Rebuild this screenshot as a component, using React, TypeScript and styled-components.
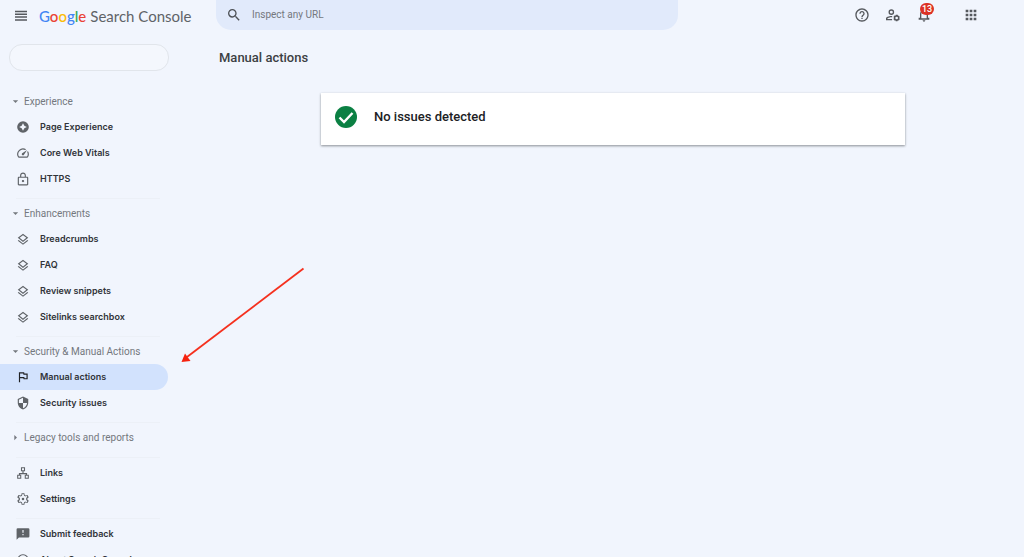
import React from "react";
import styled, { createGlobalStyle } from "styled-components";

const Global = createGlobalStyle`
  * { box-sizing: border-box; }
  html, body { margin: 0; padding: 0; background: #f1f5fd; }
  body { font-family: Roboto, "Liberation Sans", sans-serif; color: #202124; }
  button, input { font-family: inherit; }
`;

const Page = styled.div`
  position: relative;
  height: 100vh;
  overflow: hidden;
  display: flex;
  flex-direction: column;
`;

const Header = styled.header`
  display: flex;
  align-items: center;
  flex: none;
  height: 30px;
`;

const Brand = styled.div`
  display: flex;
  align-items: center;
  gap: 10px;
  flex: none;
  width: 216px;
  padding: 2px 0 0 13px;
`;

const IconButton = styled.button`
  position: relative;
  display: flex;
  align-items: center;
  justify-content: center;
  flex: none;
  width: 16px;
  height: 16px;
  padding: 0;
  border: 0;
  background: none;
  color: #55585d;
`;

const Logo = styled.a`
  display: flex;
  align-items: baseline;
  gap: 4px;
  font-family: Lato, Roboto, sans-serif;
  font-size: 15px;
  line-height: 20px;
  color: #5f6368;
  text-decoration: none;
  white-space: nowrap;
`;

const Wordmark = styled.span`
  font-weight: 500;
`;

const Letter = styled.span<{ $color: string }>`
  color: ${(p) => p.$color};
`;

const Search = styled.label`
  display: flex;
  align-items: center;
  gap: 10px;
  flex: 0 1 462px;
  height: 30px;
  padding-left: 10px;
  border-radius: 0 0 15px 15px;
  background: #e1eafb;
  color: #4d5156;
`;

const SearchInput = styled.input`
  flex: 1;
  min-width: 0;
  padding: 0;
  border: 0;
  outline: 0;
  background: none;
  font-size: 10px;
  line-height: 16px;
  color: #3c4043;
  &::placeholder { color: #74787e; opacity: 1; }
`;

const Tools = styled.div`
  display: flex;
  align-items: center;
  gap: 15px;
  margin-left: auto;
  padding-right: 45px;
`;

const AppsButton = styled(IconButton)`
  margin-left: 16px;
`;

const Badge = styled.span`
  position: absolute;
  left: 4px;
  top: -4px;
  min-width: 14px;
  height: 12px;
  border-radius: 6px;
  background: #dc3226;
  color: #fff;
  font-size: 9px;
  font-weight: 500;
  line-height: 12px;
  text-align: center;
`;

const Body = styled.div`
  display: flex;
  flex: 1;
  min-height: 0;
`;

const Sidebar = styled.nav`
  flex: none;
  width: 168px;
  padding-top: 14px;
`;

const Property = styled.button`
  display: block;
  width: 160px;
  height: 27px;
  margin: 0 0 18px 9px;
  border: 1px solid #e1e5eb;
  border-radius: 13px;
  background: #f4f7fd;
`;

const Group = styled.section<{ $closed?: boolean }>`
  padding-bottom: ${(p) => (p.$closed ? 10 : 9)}px;
  background: linear-gradient(#ecf0f7, #ecf0f7) 16px calc(100% - 2px) / 144px 1px no-repeat;
`;

const GroupToggle = styled.button`
  display: flex;
  align-items: center;
  gap: 5px;
  width: 100%;
  height: 25px;
  padding: 0 0 0 12px;
  border: 0;
  background: none;
  color: #74787e;
  font-size: 10px;
  line-height: 16px;
  text-align: left;
  white-space: nowrap;
`;

const ItemLink = styled.a<{ $active?: boolean }>`
  display: flex;
  align-items: center;
  gap: 10px;
  height: 26px;
  padding-left: 16px;
  border-radius: 0 13px 13px 0;
  background: ${(p) => (p.$active ? "#d2e2fd" : "transparent")};
  color: #303338;
  font-family: Inter, Roboto, sans-serif;
  font-size: 9px;
  font-weight: 600;
  line-height: 16px;
  text-decoration: none;
  white-space: nowrap;
  svg { color: ${(p) => (p.$active ? "#202124" : "#5f6368")}; }
`;

const Main = styled.main`
  flex: 1;
  min-width: 0;
  padding: 18px 119px 0 51px;
`;

const Title = styled.h1`
  margin: 0;
  font-size: 13px;
  font-weight: 500;
  line-height: 20px;
  color: #3c4043;
`;

const Card = styled.section`
  display: flex;
  align-items: center;
  gap: 16px;
  height: 52px;
  margin: 25px 0 0 102px;
  padding: 0 13px 4px;
  background: #fff;
  box-shadow: 0 1px 2px rgba(60, 64, 67, 0.45), 0 1px 3px rgba(60, 64, 67, 0.15);
`;

const CardText = styled.p`
  margin: 0;
  font-size: 13px;
  font-weight: 500;
  line-height: 20px;
`;

const Arrow = styled.svg`
  position: absolute;
  left: 180px;
  top: 266px;
  pointer-events: none;
`;

const paths: Record<string, string> = {
  menu: "M3 19h18v-2.300H3zm0-4.200h18v-2.300H3zm0-4.200h18V8.300H3zm0-6.500v2.300h18V4.100z",
  search: "M15.5 14h-.79l-.28-.27A6.47 6.47 0 0 0 16 9.5 6.5 6.5 0 1 0 9.5 16c1.61 0 3.09-.59 4.23-1.57l.27.28v.79l5 4.99L20.49 19l-4.99-5zm-6 0C7.01 14 5 11.99 5 9.5S7.01 5 9.5 5 14 7.01 14 9.5 11.99 14 9.5 14z",
  help: "M11 18h2v-2h-2v2zm1-16C6.48 2 2 6.48 2 12s4.48 10 10 10 10-4.48 10-10S17.52 2 12 2zm0 18c-4.41 0-8-3.59-8-8s3.59-8 8-8 8 3.59 8 8-3.59 8-8 8zm0-14c-2.21 0-4 1.79-4 4h2c0-1.1.9-2 2-2s2 .9 2 2c0 2-3 1.75-3 5h2c0-2.25 3-2.5 3-5 0-2.21-1.79-4-4-4z",
  users: "M9.500 3.500a4.200 4.200 0 1 0 0 8.400 4.200 4.200 0 0 0 0-8.400zm0 2a2.200 2.200 0 1 1 0 4.400 2.200 2.200 0 0 1 0-4.400zM1.500 17.500c0-2.800 5-4.300 9.300-4v2c-3.300-.1-6.800.900-7.200 2v.5h7v2h-9.100zM17.500 11.500l1.500.3.500 1.300 1.400-.1 1.300 2.100-.9 1.400.9 1.400-1.300 2.200-1.500-.1-.7 1.300h-2.500l-.8-1.300-1.500.1-1.200-2.200.9-1.400-.9-1.400 1.300-2.200 1.500.1.700-1.400zm0 3a2 2 0 1 0 0 4 2 2 0 0 0 0-4z",
  bell: "M12 22c1.1 0 2-.9 2-2h-4c0 1.100.890 2 2 2zm6-6v-5c0-3.070-1.640-5.640-4.500-6.320V4c0-.830-.670-1.500-1.500-1.500s-1.500.670-1.500 1.500v.680C7.630 5.360 6 7.920 6 11v5H4v3h16v-3zm-2 1H8v-6c0-2.480 1.510-4.500 4-4.500s4 2.020 4 4.500v6z",
  apps: "M4 4h4v4H4zM10 4h4v4h-4zM16 4h4v4h-4zM4 10h4v4H4zM10 10h4v4h-4zM16 10h4v4h-4zM4 16h4v4H4zM10 16h4v4h-4zM16 16h4v4h-4z",
  experience: "M12 2a10 10 0 1 0 0 20 10 10 0 0 0 0-20zm2.300 12.300L12 18.500l-2.300-4.200L5.500 12l4.200-2.300L12 5.500l2.300 4.200L18.500 12z",
  speed: "M20.380 8.570l-1.230 1.850a8 8 0 0 1-.22 7.580H5.070A8 8 0 0 1 15.580 6.850l1.850-1.230A10 10 0 0 0 3.350 19a2 2 0 0 0 1.720 1h13.850a2 2 0 0 0 1.740-1 10 10 0 0 0-.27-10.440zm-9.790 6.840a2 2 0 0 0 2.830 0l5.660-8.490-8.490 5.660a2 2 0 0 0 0 2.830z",
  lock: "M19 8h-2V6c0-2.760-2.240-5-5-5S7 3.240 7 6v2H5c-1.100 0-2 .9-2 2v11c0 1.100.9 2 2 2h14c1.100 0 2-.9 2-2V10c0-1.100-.9-2-2-2zM9 6c0-1.660 1.340-3 3-3s3 1.340 3 3v2H9V6zm10 15H5V10h14v11zm-7-3.500c1.100 0 2-.9 2-2s-.9-2-2-2-2 .9-2 2 .9 2 2 2z",
  layers: "M11.990 19.540l-7.370-5.730L3 15.070l9 7 9-7-1.630-1.270-7.380 5.740zM12 17l7.360-5.730L21 10l-9-7-9 7 1.630 1.270L12 17zm0-11.470L17.740 10 12 14.470 6.260 10 12 5.530z",
  flag: "M12.360 6l.4 2H18v6h-3.360l-.4-2H7V6h5.360M14 4H5v17h2v-7h5.600l.4 2h7V6h-5.600L14 4z",
  shield: "M12 1L3 5v6c0 5.550 3.840 10.740 9 12 5.160-1.260 9-6.450 9-12V5l-9-4zm0 2.200v8.800h7c-.5 4-3.300 7.700-7 8.900V12H5V6.300z",
  links: "M8.500 2v7H11v3H5v3H2v7h7v-7H7v-1h10v1h-2v7h7v-7h-3v-3h-6V9h2.500V2zm1.800 1.800h3.400v3.400h-3.400zM3.800 16.800h3.400v3.400H3.800zm13 0h3.400v3.400h-3.400z",
  settings: "M19.430 12.980c.040-.320.070-.640.070-.980s-.030-.660-.070-.980l2.110-1.650c.190-.150.240-.420.120-.640l-2-3.460c-.120-.220-.390-.3-.610-.220l-2.490 1c-.520-.4-1.080-.730-1.690-.980l-.380-2.650C14.460 2.180 14.250 2 14 2h-4c-.25 0-.46.180-.49.420l-.38 2.650c-.61.250-1.170.59-1.690.98l-2.490-1c-.23-.09-.49 0-.61.220l-2 3.460c-.13.220-.07.490.12.640l2.110 1.650c-.04.320-.07.650-.07.980s.03.660.07.980l-2.110 1.650c-.19.150-.24.420-.12.640l2 3.460c.12.220.39.300.61.220l2.490-1c.52.400 1.080.730 1.690.980l.38 2.650c.03.240.24.420.49.420h4c.25 0 .46-.18.49-.42l.38-2.650c.61-.25 1.170-.59 1.690-.98l2.490 1c.23.090.49 0 .61-.22l2-3.460c.12-.22.070-.49-.12-.64zm-1.980-1.710c.04.31.05.520.05.730s-.02.430-.05.730l-.14 1.130 2.080 1.640-1.130 1.950-2.470-1-1.180.890-.86.340L13.370 20h-2.740l-.38-2.520-1.060-.43-.9-.68-2.440.98-1.130-1.950 2.080-1.640-.14-1.130a7 7 0 0 1 0-1.260l.14-1.130L4.720 8.600l1.130-1.950 2.470 1 1.180-.89.860-.34L10.630 4h2.740l.38 2.420 1.060.43.9.68 2.440-.98 1.130 1.950-2.080 1.640zM12 9.800a2.200 2.200 0 1 0 0 4.400 2.200 2.200 0 0 0 0-4.400z",
  feedback: "M21 2H3a2 2 0 0 0-2 2v18l4-4h16a2 2 0 0 0 2-2V4a2 2 0 0 0-2-2zm-8 12h-2v-2h2v2zm0-4h-2V5h2v5z",
  info: "M11 17h2v-6h-2v6zm1-15C6.480 2 2 6.480 2 12s4.480 10 10 10 10-4.480 10-10S17.520 2 12 2zm0 18c-4.410 0-8-3.590-8-8s3.590-8 8-8 8 3.590 8 8-3.590 8-8 8zM11 9h2V7h-2v2z",
  down: "M3 8l9 9 9-9z",
  right: "M8 3l9 9-9 9z",
};

const Icon = ({ name, size = 14 }: { name: string; size?: number }) => (
  <svg width={size} height={size} viewBox="0 0 24 24" fill="currentColor" fillRule="evenodd" aria-hidden="true">
    <path d={paths[name]} />
  </svg>
);

type Entry = { icon: string; label: string; active?: boolean };
type Section = { title?: string; closed?: boolean; items: Entry[] };

const sections: Section[] = [
  {
    title: "Experience",
    items: [
      { icon: "experience", label: "Page Experience" },
      { icon: "speed", label: "Core Web Vitals" },
      { icon: "lock", label: "HTTPS" },
    ],
  },
  {
    title: "Enhancements",
    items: ["Breadcrumbs", "FAQ", "Review snippets", "Sitelinks searchbox"].map((label) => ({ icon: "layers", label })),
  },
  {
    title: "Security & Manual Actions",
    items: [
      { icon: "flag", label: "Manual actions", active: true },
      { icon: "shield", label: "Security issues" },
    ],
  },
  { title: "Legacy tools and reports", closed: true, items: [] },
  {
    items: [
      { icon: "links", label: "Links" },
      { icon: "settings", label: "Settings" },
    ],
  },
  {
    items: [
      { icon: "feedback", label: "Submit feedback" },
      { icon: "info", label: "About Search Console" },
    ],
  },
];

const google: [string, string][] = [
  ["G", "#4285f4"],
  ["o", "#ea4335"],
  ["o", "#fbbc05"],
  ["g", "#4285f4"],
  ["l", "#34a853"],
  ["e", "#ea4335"],
];

export default function App() {
  return (
    <Page>
      <Global />
      <Header>
        <Brand>
          <IconButton aria-label="Main menu">
            <Icon name="menu" size={16} />
          </IconButton>
          <Logo href="#">
            <Wordmark>
              {google.map(([letter, color], i) => (
                <Letter key={i} $color={color}>{letter}</Letter>
              ))}
            </Wordmark>
            <span>Search Console</span>
          </Logo>
        </Brand>
        <Search>
          <Icon name="search" size={16} />
          <SearchInput type="text" placeholder="Inspect any URL" aria-label="Inspect any URL" />
        </Search>
        <Tools>
          <IconButton aria-label="Help">
            <Icon name="help" size={16} />
          </IconButton>
          <IconButton aria-label="Users and permissions">
            <Icon name="users" size={16} />
          </IconButton>
          <IconButton aria-label="Notifications">
            <Icon name="bell" size={16} />
            <Badge>13</Badge>
          </IconButton>
          <AppsButton aria-label="Google apps">
            <Icon name="apps" size={16} />
          </AppsButton>
        </Tools>
      </Header>
      <Body>
        <Sidebar>
          <Property aria-label="Select property" />
          {sections.map((section, i) => (
            <Group key={i} $closed={section.closed}>
              {section.title && (
                <GroupToggle aria-expanded={!section.closed}>
                  <Icon name={section.closed ? "right" : "down"} size={7} />
                  {section.title}
                </GroupToggle>
              )}
              {section.items.map((item) => (
                <ItemLink key={item.label} href="#" $active={item.active}>
                  <Icon name={item.icon} />
                  {item.label}
                </ItemLink>
              ))}
            </Group>
          ))}
        </Sidebar>
        <Main>
          <Title>Manual actions</Title>
          <Card>
            <svg width="24" height="24" viewBox="0 0 24 24" aria-hidden="true">
              <circle cx="12" cy="12" r="11" fill="#0b8043" />
              <path d="M5.500 12.500l4.500 4.500 8.500-9" fill="none" stroke="#fff" strokeWidth="2.400" />
            </svg>
            <CardText>No issues detected</CardText>
          </Card>
        </Main>
      </Body>
      <Arrow width="126" height="98" viewBox="0 0 126 98" aria-hidden="true">
        <path d="M123.500 2.500L7 91" stroke="#f5301e" strokeWidth="1.800" fill="none" />
        <path d="M1.500 96L5 87.500l5.500 7.500z" fill="#f5220f" />
      </Arrow>
    </Page>
  );
}
